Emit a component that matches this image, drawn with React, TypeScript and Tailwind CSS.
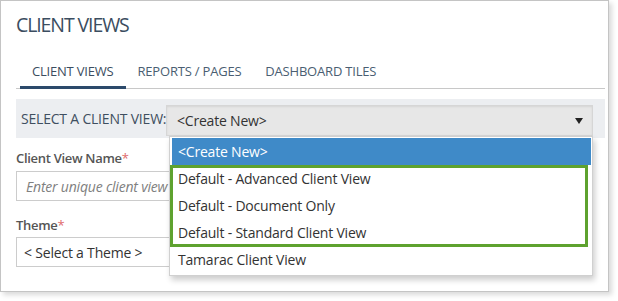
import React from "react";

function Caret() {
  return (
    <svg width="8" height="6" viewBox="0 0 8 6">
      <path d="M0 0 H8 L4 6 Z" fill="#222" />
    </svg>
  );
}

export default function App() {
  const font = { fontFamily: '"Open Sans", "Noto Sans", sans-serif' };
  return (
    <div className="w-[618px] h-[301px] bg-white relative text-[#333]" style={font}>
      <div className="w-[609px] h-[292px] border border-[#c4c4c4] bg-white shadow-[3px_3px_5px_rgba(0,0,0,0.15)] pl-[15px]">
        <div className="pt-[12px] h-[51px] text-[19.5px] leading-[24px] text-[#3b4d60] tracking-[-1.1px] whitespace-nowrap">
          CLIENT VIEWS
        </div>
        <div className="w-[589px] border-b border-[#c8c8c8] flex text-[13px] text-[#4a5e72] tracking-[-0.2px] whitespace-nowrap leading-[18px]">
          <div className="ml-[4px] px-[12px] pt-[10px] pb-[6px] border-b-[3px] border-[#2c4a6b] -mb-[1px] text-[#3b4d60]">CLIENT VIEWS</div>
          <div className="px-[12px] pt-[10px] pb-[8px]">REPORTS / PAGES</div>
          <div className="px-[12px] pt-[10px] pb-[8px]">DASHBOARD TILES</div>
        </div>
        <div className="mt-[10px] w-[589px] h-[39px] bg-[#eceef1] flex items-center pl-[5px] text-[14px] text-[#3f4f60] tracking-[-0.2px] whitespace-nowrap">
          SELECT A CLIENT VIEW:
        </div>
        <div className="mt-[11px] text-[13px] font-semibold text-[#555] leading-[18px] tracking-[-0.3px]">
          Client View Name<span className="text-[#e06a6a] font-normal">*</span>
        </div>
        <div className="mt-[4px] w-[200px] h-[30px] border border-[#ccc] flex items-center pl-[9px] text-[14px] italic text-[#808080] tracking-[-0.2px] whitespace-nowrap">
          Enter unique client view name
        </div>
        <div className="mt-[15px] text-[13px] font-semibold text-[#555] leading-[18px] tracking-[-0.3px]">
          Theme<span className="text-[#e06a6a] font-normal">*</span>
        </div>
        <div className="mt-[3px] w-[200px] h-[30px] border border-[#ccc] flex items-center pl-[7px] text-[14px] text-[#333] tracking-[-0.2px] whitespace-nowrap">
          &lt; Select a Theme &gt;
        </div>
      </div>

      {/* select */}
      <div className="absolute left-[166px] top-[105px] w-[427px] h-[31px] bg-[#e7e7e7] border border-[#d6d6d6] shadow-[inset_0_1px_2px_rgba(0,0,0,0.08)] flex items-center justify-between pl-[10px] pr-[9px] text-[14px] text-[#333] tracking-[-0.2px]">
        <span>&lt;Create New&gt;</span>
        <Caret />
      </div>

      {/* dropdown */}
      <div className="absolute left-[169px] top-[136px] w-[424px] bg-white border border-[#d0d0d0] shadow-[2px_4px_6px_rgba(0,0,0,0.2)] pt-[1px] pb-[2px] text-[14px] text-[#333] tracking-[-0.2px] whitespace-nowrap">
        <div className="ml-[2px] mr-[1px] h-[27px] bg-[#3f8ac8] text-white flex items-center pl-[6px]">&lt;Create New&gt;</div>
        <div className="h-[27px] flex items-center pl-[8px]">Default - Advanced Client View</div>
        <div className="h-[27px] flex items-center pl-[8px]">Default - Document Only</div>
        <div className="h-[27px] flex items-center pl-[8px]">Default - Standard Client View</div>
        <div className="h-[27px] flex items-center pl-[8px]">Tamarac Client View</div>
        <div className="absolute left-[0px] top-[28px] w-[418px] h-[82px] border-[3px] border-[#5ea22f] pointer-events-none" />
      </div>
    </div>
  );
}
